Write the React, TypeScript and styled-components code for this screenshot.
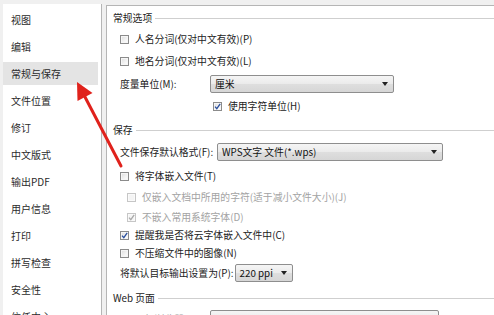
import React from "react";
import styled, { createGlobalStyle } from "styled-components";

const Global = createGlobalStyle`
  html, body { margin: 0; padding: 0; background: #f0f0f0; }
  body { font-family: "Noto Sans CJK SC", "Noto Sans", "Liberation Sans", sans-serif; }
  * { box-sizing: border-box; }
`;

const Root = styled.div`
  position: relative;
  width: 494px;
  height: 315px;
  overflow: hidden;
  background: #f0f0f0;
  display: flex;
  gap: 4px;
  padding: 4px 0 0 3px;
  font-size: 10px;
  color: #222;
`;

const LeftPanel = styled.div`
  width: 99px;
  flex-shrink: 0;
  background: #fff;
  border-right: 1px solid #b5b5b5;
  display: flex;
  flex-direction: column;
  gap: 4px;
  padding-top: 4px;
  overflow: hidden;
`;

const NavItem = styled.div<{ $active?: boolean }>`
  height: 23px;
  flex-shrink: 0;
  margin-right: 3px;
  padding-left: 8px;
  display: flex;
  align-items: center;
  background: ${(p) => (p.$active ? "#e4e4e4" : "transparent")};
  color: #2b2b2b;
  white-space: nowrap;
`;

const RightPanel = styled.div`
  flex: 1;
  margin-top: 1px;
  background: #fff;
  border-left: 1px solid #b5b5b5;
  border-top: 1px solid #b5b5b5;
  padding: 3px 0 0 6px;
  display: flex;
  flex-direction: column;
  overflow: hidden;
  font-size: 9.8px;
`;

const Row = styled.div<{ $mt?: number; $indent?: number }>`
  height: 18px;
  flex-shrink: 0;
  margin-top: ${(p) => p.$mt ?? 0}px;
  padding-left: ${(p) => p.$indent ?? 0}px;
  display: flex;
  align-items: center;
  white-space: nowrap;
`;

const GroupLabel = styled.span`
  color: #222;
`;

const GroupLine = styled.div`
  flex: 1;
  height: 1px;
  margin-left: 3px;
  background: #cfcfcf;
`;

const Label = styled.span<{ $w?: number; $disabled?: boolean }>`
  display: inline-block;
  ${(p) => (p.$w ? `min-width: ${p.$w}px; padding-right: 1px;` : "")}
  flex-shrink: 0;
  color: ${(p) => (p.$disabled ? "#a3a3a3" : "#222")};
`;

const Box = styled.span<{ $disabled?: boolean }>`
  position: relative;
  width: 9px;
  height: 9px;
  flex-shrink: 0;
  margin-right: 6px;
  border: 1px solid ${(p) => (p.$disabled ? "#c6c6c6" : "#8b8b8b")};
  background: ${(p) =>
    p.$disabled
      ? "#f4f4f4"
      : "linear-gradient(135deg, #dcdcdc 0%, #f4f4f4 60%, #ffffff 100%)"};
  box-shadow: inset 0 0 0 1px ${(p) => (p.$disabled ? "#fafafa" : "#f6f6f6")};
  svg {
    position: absolute;
    left: -1px;
    top: -1px;
  }
`;

const SelectBox = styled.div<{ $w: number }>`
  width: ${(p) => p.$w}px;
  height: 18px;
  flex-shrink: 0;
  border: 1px solid #8e8e8e;
  border-radius: 2px;
  background: linear-gradient(#f5f5f5 0%, #ebebeb 48%, #dedede 52%, #d6d6d6 100%);
  display: flex;
  align-items: center;
  justify-content: space-between;
  padding: 0 5px 0 4px;
  color: #111;
`;

const Caret = styled.span`
  width: 0;
  height: 0;
  border-left: 3px solid transparent;
  border-right: 3px solid transparent;
  border-top: 4px solid #222;
`;

const Overlay = styled.svg`
  position: absolute;
  left: 0;
  top: 0;
  pointer-events: none;
`;

function Check({
  label,
  checked,
  disabled,
  mt,
  indent,
}: {
  label: string;
  checked?: boolean;
  disabled?: boolean;
  mt?: number;
  indent?: number;
}) {
  return (
    <Row $mt={mt} $indent={indent}>
      <Box $disabled={disabled}>
        {checked && (
          <svg width="9" height="9" viewBox="0 0 9 9">
            <path
              d="M2 4.6 L3.8 6.6 L7.2 1.8"
              fill="none"
              stroke={disabled ? "#a9a9a9" : "#2b4f9e"}
              strokeWidth="1.3"
            />
          </svg>
        )}
      </Box>
      <Label $disabled={disabled}>{label}</Label>
    </Row>
  );
}

function SelectRow({
  label,
  labelW,
  value,
  w,
  mt,
  indent,
  dim,
}: {
  label: string;
  labelW: number;
  value: string;
  w: number;
  mt?: number;
  indent?: number;
  dim?: boolean;
}) {
  return (
    <Row $mt={mt} $indent={indent}>
      <Label $w={labelW} $disabled={dim}>
        {label}
      </Label>
      <SelectBox $w={w}>
        <span>{value}</span>
        <Caret />
      </SelectBox>
    </Row>
  );
}

function Group({ title, mt }: { title: string; mt?: number }) {
  return (
    <Row $mt={mt}>
      <GroupLabel>{title}</GroupLabel>
      <GroupLine />
    </Row>
  );
}

const navItems = [
  "视图",
  "编辑",
  "常规与保存",
  "文件位置",
  "修订",
  "中文版式",
  "输出PDF",
  "用户信息",
  "打印",
  "拼写检查",
  "安全性",
  "信任中心",
];

export default function App() {
  return (
    <>
      <Global />
      <Root>
        <LeftPanel>
          {navItems.map((n) => (
            <NavItem key={n} $active={n === "常规与保存"}>
              {n}
            </NavItem>
          ))}
        </LeftPanel>
        <RightPanel>
          <Group title="常规选项" />
          <Check mt={3} indent={7} label="人名分词(仅对中文有效)(P)" />
          <Check mt={4} indent={7} label="地名分词(仅对中文有效)(L)" />
          <SelectRow mt={5} indent={7} label="度量单位(M):" labelW={90} value="厘米" w={184} />
          <Check mt={4} indent={100} checked label="使用字符单位(H)" />

          <Group mt={6} title="保存" />
          <SelectRow
            mt={4}
            indent={7}
            label="文件保存默认格式(F):"
            labelW={97}
            value="WPS文字 文件(*.wps)"
            w={226}
          />
          <Check mt={6} indent={7} label="将字体嵌入文件(T)" />
          <Check mt={3} indent={14} disabled label="仅嵌入文档中所用的字符(适于减小文件大小)(J)" />
          <Check mt={2} indent={14} disabled checked label="不嵌入常用系统字体(D)" />
          <Check mt={0} indent={7} checked label="提醒我是否将云字体嵌入文件中(C)" />
          <Check mt={0} indent={7} label="不压缩文件中的图像(N)" />
          <SelectRow
            mt={2}
            indent={7}
            label="将默认目标输出设置为(P):"
            labelW={114}
            value="220 ppi"
            w={58}
          />

          <Group mt={7} title="Web 页面" />
          <SelectRow mt={3} indent={22} dim label="目标浏览器(B):" labelW={75} value="" w={229} />
        </RightPanel>
        <Overlay width="494" height="315" viewBox="0 0 494 315">
          <line x1="121" y1="166" x2="85" y2="97" stroke="#e0221c" strokeWidth="3" strokeLinecap="round" />
          <polygon points="77,82 77.5,101 92.5,93" fill="#e0221c" />
        </Overlay>
      </Root>
    </>
  );
}
